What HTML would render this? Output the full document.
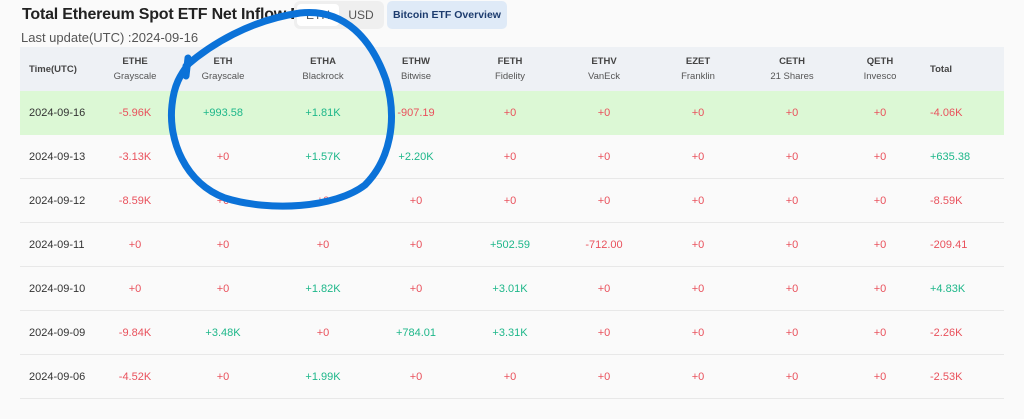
<!DOCTYPE html>
<html><head><style>
body{margin:0;width:1024px;height:419px;background:#fafafa;font-family:"Liberation Sans",sans-serif;position:relative;overflow:hidden}
.t{position:absolute;left:22px;top:6px;font-size:16px;font-weight:bold;color:#222;letter-spacing:-0.2px;white-space:nowrap}
.u{position:absolute;left:21px;top:30px;font-size:13px;color:#555}
.tg{position:absolute;left:294px;top:1px;width:90px;height:28px;background:#efefef;border-radius:6px}
.tg div{position:absolute;top:3px;height:22px;line-height:22px;font-size:12px;color:#555;text-align:center;width:42px}
.bt{position:absolute;left:387px;top:1px;width:120px;height:28px;background:#dfeaf7;border-radius:5px;font-size:10.5px;font-weight:bold;color:#1d3c6e;line-height:28px;text-align:center;white-space:nowrap}
table{position:absolute;left:20px;top:47px;width:984px;border-collapse:collapse;font-size:11px}
th,td{padding:0}
th{background:#eef1f5;height:44px;font-weight:normal;color:#555;font-size:9.5px;line-height:15px}
th b{font-weight:bold;color:#444}
td{height:43px;border-bottom:1px solid #e8e8e8;text-align:center}
tr.g td{background:#dcf8d5;border-bottom-color:#dcf8d5}
td:first-child,th:first-child{text-align:left;padding-left:9px;color:#333}
td:last-child,th:last-child{text-align:left}
.r{color:#e9515c}.p{color:#1eb78a}
</style></head><body>
<div class="t">Total Ethereum Spot ETF Net Inflow ETH</div>
<div class="u">Last update(UTC) :2024-09-16</div>
<div class="tg"><div style="left:3px;background:#fff;border-radius:4px">ETH</div><div style="left:46px">USD</div></div>
<div class="bt">Bitcoin ETF Overview</div>
<table>
<colgroup><col style="width:72px"><col style="width:86px"><col style="width:90px"><col style="width:110px"><col style="width:76px"><col style="width:112px"><col style="width:76px"><col style="width:112px"><col style="width:76px"><col style="width:100px"><col></colgroup>
<tr><th><b>Time(UTC)</b></th><th><b>ETHE</b><br>Grayscale</th><th><b>ETH</b><br>Grayscale</th><th><b>ETHA</b><br>Blackrock</th><th><b>ETHW</b><br>Bitwise</th><th><b>FETH</b><br>Fidelity</th><th><b>ETHV</b><br>VanEck</th><th><b>EZET</b><br>Franklin</th><th><b>CETH</b><br>21 Shares</th><th><b>QETH</b><br>Invesco</th><th><b>Total</b></th></tr>
<tr class="g"><td>2024-09-16</td><td class="r">-5.96K</td><td class="p">+993.58</td><td class="p">+1.81K</td><td class="r">-907.19</td><td class="r">+0</td><td class="r">+0</td><td class="r">+0</td><td class="r">+0</td><td class="r">+0</td><td class="r">-4.06K</td></tr>
<tr><td>2024-09-13</td><td class="r">-3.13K</td><td class="r">+0</td><td class="p">+1.57K</td><td class="p">+2.20K</td><td class="r">+0</td><td class="r">+0</td><td class="r">+0</td><td class="r">+0</td><td class="r">+0</td><td class="p">+635.38</td></tr>
<tr><td>2024-09-12</td><td class="r">-8.59K</td><td class="r">+0</td><td class="r">+0</td><td class="r">+0</td><td class="r">+0</td><td class="r">+0</td><td class="r">+0</td><td class="r">+0</td><td class="r">+0</td><td class="r">-8.59K</td></tr>
<tr><td>2024-09-11</td><td class="r">+0</td><td class="r">+0</td><td class="r">+0</td><td class="r">+0</td><td class="p">+502.59</td><td class="r">-712.00</td><td class="r">+0</td><td class="r">+0</td><td class="r">+0</td><td class="r">-209.41</td></tr>
<tr><td>2024-09-10</td><td class="r">+0</td><td class="r">+0</td><td class="p">+1.82K</td><td class="r">+0</td><td class="p">+3.01K</td><td class="r">+0</td><td class="r">+0</td><td class="r">+0</td><td class="r">+0</td><td class="p">+4.83K</td></tr>
<tr><td>2024-09-09</td><td class="r">-9.84K</td><td class="p">+3.48K</td><td class="r">+0</td><td class="p">+784.01</td><td class="p">+3.31K</td><td class="r">+0</td><td class="r">+0</td><td class="r">+0</td><td class="r">+0</td><td class="r">-2.26K</td></tr>
<tr><td>2024-09-06</td><td class="r">-4.52K</td><td class="r">+0</td><td class="p">+1.99K</td><td class="r">+0</td><td class="r">+0</td><td class="r">+0</td><td class="r">+0</td><td class="r">+0</td><td class="r">+0</td><td class="r">-2.53K</td></tr>
</table>
<svg style="position:absolute;left:0;top:0" width="1024" height="419"><path d="M186 76 L188 58 M186 66 C210 45 250 20 300 13 C345 8 372 40 386 80 C398 120 390 160 365 185 C335 208 270 212 225 198 C185 183 168 140 172 105 C174 85 180 75 190 62" fill="none" stroke="#0b72d8" stroke-width="7" stroke-linecap="round"/></svg>
</body></html>
